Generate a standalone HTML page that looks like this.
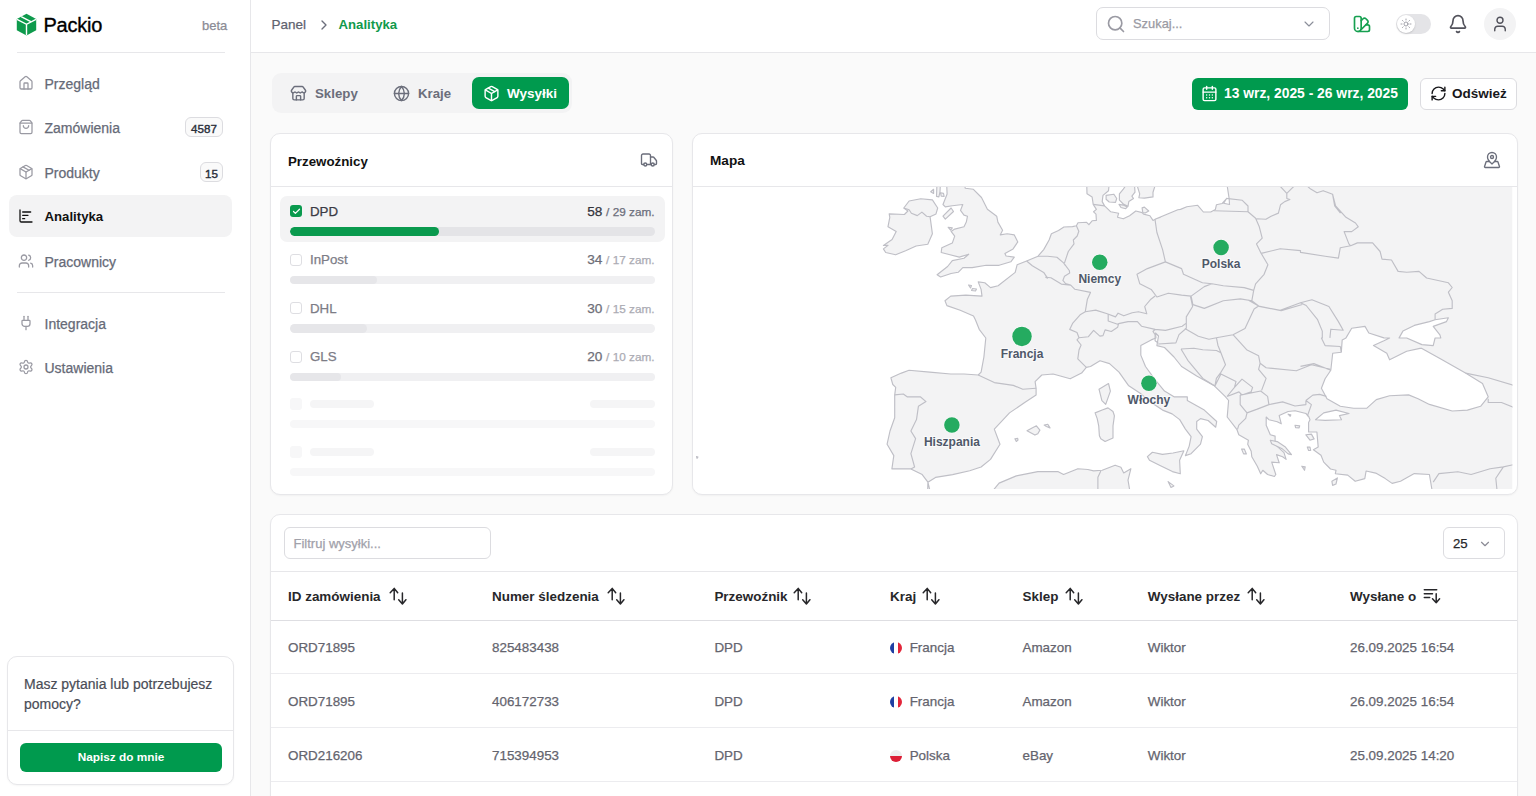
<!DOCTYPE html>
<html lang="pl">
<head>
<meta charset="utf-8">
<title>Packio - Analityka</title>
<style>
*{box-sizing:border-box;margin:0;padding:0}
html,body{width:1536px;height:796px;overflow:hidden}
body{position:relative;background:#fafafa;font-family:"Liberation Sans",sans-serif;color:#18181b;-webkit-font-smoothing:antialiased}
.abs{position:absolute}
svg.ic{position:absolute;fill:none;stroke:currentColor;stroke-linecap:round;stroke-linejoin:round}
.t{position:absolute;white-space:nowrap;line-height:1;-webkit-text-stroke:0.25px currentColor}
.t[style*="font-weight:bold"],.nav.act .t{-webkit-text-stroke:0}
/* sidebar */
#sb{position:absolute;left:0;top:0;width:251px;height:796px;background:#fff;border-right:1px solid #e7e7ea}
.nav{position:absolute;left:9px;width:223px;height:42px;border-radius:8px}
.nav.act{background:#f3f3f4}
.nav .t{left:35.5px;top:14.5px;font-size:14px;color:#666a77}
.nav.act .t{color:#111;font-weight:bold;font-size:13.2px;top:15px}
.nav svg{left:9.3px;top:13px;width:16px;height:16px;color:#9a9aa3;stroke-width:1.9}
.nav.act svg{color:#111}
.badge{position:absolute;height:20px;border:1px solid #dcdce0;border-radius:6px;font-size:11.6px;-webkit-text-stroke:0.4px #2a2f3a;line-height:21px;text-align:center;color:#2a2f3a;background:#fafafa}
.hr{position:absolute;height:1px;background:#e7e7ea}
/* header */
#hd{position:absolute;left:251px;top:0;width:1285px;height:53px;background:#fff;border-bottom:1px solid #e7e7ea}
.card{position:absolute;background:#fff;border:1px solid #e7e7ea;border-radius:10px;overflow:hidden;box-shadow:0 1px 2px rgba(0,0,0,.04)}
</style>
</head>
<body>
<!-- SIDEBAR -->
<div id="sb">
  <svg class="abs" style="left:16px;top:13px" width="21" height="23" viewBox="0 0 21 23">
    <path d="M10.5 0.8 L20.2 6 L20.2 17.2 L10.5 22.4 L0.8 17.2 L0.8 6 Z" fill="#0e9a4c"/>
    <path d="M1 6.3 L10.5 11.3 L20 6.3 M10.5 11.3 L10.5 22.3 M5.2 3.6 L14.8 8.7" stroke="#fff" stroke-width="1.4" fill="none"/>
  </svg>
  <div class="t" style="left:43.5px;top:15.2px;font-size:20px;color:#000;letter-spacing:-0.25px;-webkit-text-stroke:0.35px #000">Packio</div>
  <div class="t" style="left:202px;top:19px;font-size:13px;color:#8b8b95">beta</div>
  <div class="hr" style="left:17px;top:52px;width:208px"></div>

  <div class="nav" style="top:62px">
    <svg class="ic" viewBox="0 0 24 24"><path d="M15 21v-8a1 1 0 0 0-1-1h-4a1 1 0 0 0-1 1v8"/><path d="M3 10a2 2 0 0 1 .709-1.528l7-6a2 2 0 0 1 2.582 0l7 6A2 2 0 0 1 21 10v9a2 2 0 0 1-2 2H5a2 2 0 0 1-2-2z"/></svg>
    <div class="t">Przegląd</div>
  </div>
  <div class="nav" style="top:106px">
    <svg class="ic" viewBox="0 0 24 24"><path d="M16 10a4 4 0 0 1-8 0"/><path d="M3.103 6.034h17.794"/><path d="M3.4 5.467a2 2 0 0 0-.4 1.2V20a2 2 0 0 0 2 2h14a2 2 0 0 0 2-2V6.667a2 2 0 0 0-.4-1.2l-2-2.667A2 2 0 0 0 17 2H7a2 2 0 0 0-1.6.8z"/></svg>
    <div class="t">Zamówienia</div>
  </div>
  <div class="badge" style="left:185px;top:117px;width:38px">4587</div>
  <div class="nav" style="top:151px">
    <svg class="ic" viewBox="0 0 24 24"><path d="M11 21.73a2 2 0 0 0 2 0l7-4A2 2 0 0 0 21 16V8a2 2 0 0 0-1-1.73l-7-4a2 2 0 0 0-2 0l-7 4A2 2 0 0 0 3 8v8a2 2 0 0 0 1 1.73z"/><path d="M12 22V12"/><polyline points="3.29 7 12 12 20.71 7"/><path d="m7.5 4.27 9 5.15"/></svg>
    <div class="t">Produkty</div>
  </div>
  <div class="badge" style="left:200px;top:162px;width:23px">15</div>
  <div class="nav act" style="top:195px">
    <svg class="ic" viewBox="0 0 24 24"><path d="M3 3v16a2 2 0 0 0 2 2h16"/><path d="M7 11h8"/><path d="M7 16h3"/><path d="M7 6h12"/></svg>
    <div class="t">Analityka</div>
  </div>
  <div class="nav" style="top:240px">
    <svg class="ic" viewBox="0 0 24 24"><path d="M16 21v-2a4 4 0 0 0-4-4H6a4 4 0 0 0-4 4v2"/><path d="M16 3.128a4 4 0 0 1 0 7.744"/><path d="M22 21v-2a4 4 0 0 0-3-3.87"/><circle cx="9" cy="7" r="4"/></svg>
    <div class="t">Pracownicy</div>
  </div>
  <div class="hr" style="left:17px;top:292px;width:208px"></div>
  <div class="nav" style="top:302px">
    <svg class="ic" viewBox="0 0 24 24"><path d="M12 22v-5"/><path d="M15 8V2"/><path d="M17 8a1 1 0 0 1 1 1v4a4 4 0 0 1-4 4h-4a4 4 0 0 1-4-4V9a1 1 0 0 1 1-1z"/><path d="M9 8V2"/></svg>
    <div class="t">Integracja</div>
  </div>
  <div class="nav" style="top:346px">
    <svg class="ic" viewBox="0 0 24 24"><path d="M9.671 4.136a2.34 2.34 0 0 1 4.659 0 2.34 2.34 0 0 0 3.319 1.915 2.34 2.34 0 0 1 2.33 4.033 2.34 2.34 0 0 0 0 3.831 2.34 2.34 0 0 1-2.33 4.033 2.34 2.34 0 0 0-3.319 1.915 2.34 2.34 0 0 1-4.659 0 2.34 2.34 0 0 0-3.32-1.915 2.34 2.34 0 0 1-2.33-4.033 2.34 2.34 0 0 0 0-3.831A2.34 2.34 0 0 1 6.35 6.051a2.34 2.34 0 0 0 3.319-1.915"/><circle cx="12" cy="12" r="3"/></svg>
    <div class="t">Ustawienia</div>
  </div>

  <!-- help card -->
  <div class="card" style="left:7px;top:656px;width:227px;height:129px;border-radius:10px">
    <div style="position:absolute;left:16px;top:17px;width:210px;font-size:14px;line-height:20px;color:#4a4d57;-webkit-text-stroke:0.2px #4a4d57">Masz pytania lub potrzebujesz pomocy?</div>
    <div class="hr" style="left:0;top:73px;width:227px"></div>
    <div class="abs" style="left:12px;top:86px;width:202px;height:29px;background:#009a4e;border-radius:6px;color:#fff;font-size:11.8px;font-weight:bold;text-align:center;line-height:29px">Napisz do mnie</div>
  </div>
</div>

<!-- HEADER -->
<div id="hd">
  <div class="t" style="left:20.5px;top:17.5px;font-size:13.5px;color:#60636f">Panel</div>
  <svg class="ic" style="left:65px;top:17px;width:16px;height:16px;color:#6b6e7b;stroke-width:2" viewBox="0 0 24 24"><path d="m9 18 6-6-6-6"/></svg>
  <div class="t" style="left:87.5px;top:18px;font-size:13.2px;color:#119a4c;font-weight:bold">Analityka</div>

  <div class="abs" style="left:845px;top:7px;width:234px;height:33px;border:1px solid #dcdce0;border-radius:7px;background:#fff"></div>
  <svg class="ic" style="left:855px;top:14px;width:20px;height:20px;color:#9a9aa3;stroke-width:2" viewBox="0 0 24 24"><path d="m21 21-4.34-4.34"/><circle cx="11" cy="11" r="8"/></svg>
  <div class="t" style="left:882px;top:17.5px;font-size:12.9px;color:#9a9aa3">Szukaj...</div>
  <svg class="ic" style="left:1050px;top:16px;width:16px;height:16px;color:#8b8e99;stroke-width:1.7" viewBox="0 0 24 24"><path d="m6 9 6 6 6-6"/></svg>

  <svg class="ic" style="left:1101px;top:14px;width:20px;height:20px;color:#16a050;stroke-width:2" viewBox="0 0 24 24"><path d="M11 17a4 4 0 0 1-8 0V5a2 2 0 0 1 2-2h4a2 2 0 0 1 2 2Z"/><path d="M16.7 13H19a2 2 0 0 1 2 2v4a2 2 0 0 1-2 2H7"/><path d="M 7 17h.01"/><path d="m11 8 2.3-2.3a2.4 2.4 0 0 1 3.404.004L18.6 7.6a2.4 2.4 0 0 1 .026 3.434L9.9 19.8"/></svg>

  <div class="abs" style="left:1144.5px;top:14px;width:35.5px;height:20px;border-radius:10px;background:#e4e4e7"></div>
  <div class="abs" style="left:1145.5px;top:15px;width:18px;height:18px;border-radius:9px;background:#fff;box-shadow:0 1px 2px rgba(0,0,0,.15)"></div>
  <svg class="ic" style="left:1148.5px;top:18px;width:12px;height:12px;color:#8b8b95;stroke-width:1.6" viewBox="0 0 24 24"><circle cx="12" cy="12" r="4"/><path d="M12 2v2"/><path d="M12 20v2"/><path d="m4.93 4.93 1.41 1.41"/><path d="m17.66 17.66 1.41 1.41"/><path d="M2 12h2"/><path d="M20 12h2"/><path d="m6.34 17.66-1.41 1.41"/><path d="m19.07 4.93-1.41 1.41"/></svg>

  <svg class="ic" style="left:1197px;top:14px;width:20px;height:20px;color:#52525b;stroke-width:2" viewBox="0 0 24 24"><path d="M10.268 21a2 2 0 0 0 3.464 0"/><path d="M3.262 15.326A1 1 0 0 0 4 17h16a1 1 0 0 0 .74-1.673C19.41 13.956 18 12.499 18 8A6 6 0 0 0 6 8c0 4.499-1.411 5.956-2.738 7.326"/></svg>

  <div class="abs" style="left:1233px;top:8px;width:32px;height:32px;border-radius:16px;background:#f3f3f4"></div>
  <svg class="ic" style="left:1240px;top:15px;width:18px;height:18px;color:#52525b;stroke-width:1.9" viewBox="0 0 24 24"><path d="M19 21v-2a4 4 0 0 0-4-4H9a4 4 0 0 0-4 4v2"/><circle cx="12" cy="7" r="4"/></svg>
</div>

<!-- TOOLBAR -->
<div class="abs" style="left:272px;top:73px;width:300px;height:40px;border-radius:9px;background:#f3f3f4"></div>
<svg class="ic" style="left:290px;top:85px;width:17px;height:17px;color:#6b6e7b;stroke-width:2" viewBox="0 0 24 24"><path d="M15 21v-5a1 1 0 0 0-1-1h-4a1 1 0 0 0-1 1v5"/><path d="M17.774 10.31a1.12 1.12 0 0 0-1.549 0 2.5 2.5 0 0 1-3.451 0 1.12 1.12 0 0 0-1.548 0 2.5 2.5 0 0 1-3.452 0 1.12 1.12 0 0 0-1.549 0 2.5 2.5 0 0 1-3.77-3.248l2.889-4.184A2 2 0 0 1 7 2h10a2 2 0 0 1 1.653.873l2.895 4.192a2.5 2.5 0 0 1-3.774 3.244"/><path d="M4 10.95V19a2 2 0 0 0 2 2h12a2 2 0 0 0 2-2v-8.05"/></svg>
<div class="t" style="left:315px;top:87px;font-size:13.3px;font-weight:bold;color:#6b6e7b">Sklepy</div>
<svg class="ic" style="left:393px;top:85px;width:17px;height:17px;color:#6b6e7b;stroke-width:2" viewBox="0 0 24 24"><circle cx="12" cy="12" r="10"/><path d="M12 2a14.5 14.5 0 0 0 0 20 14.5 14.5 0 0 0 0-20"/><path d="M2 12h20"/></svg>
<div class="t" style="left:418px;top:87px;font-size:13.2px;font-weight:bold;color:#6b6e7b">Kraje</div>
<div class="abs" style="left:472px;top:77px;width:97px;height:32px;border-radius:7px;background:#009a4e"></div>
<svg class="ic" style="left:482.5px;top:85px;width:17px;height:17px;color:#fff;stroke-width:2" viewBox="0 0 24 24"><path d="M11 21.73a2 2 0 0 0 2 0l7-4A2 2 0 0 0 21 16V8a2 2 0 0 0-1-1.73l-7-4a2 2 0 0 0-2 0l-7 4A2 2 0 0 0 3 8v8a2 2 0 0 0 1 1.73z"/><path d="M12 22V12"/><polyline points="3.29 7 12 12 20.71 7"/><path d="m7.5 4.27 9 5.15"/></svg>
<div class="t" style="left:507px;top:87px;font-size:13.5px;font-weight:bold;color:#fff">Wysyłki</div>

<div class="abs" style="left:1192px;top:77.5px;width:216px;height:32px;border-radius:6px;background:#009a4e"></div>
<svg class="ic" style="left:1201px;top:84.5px;width:17px;height:17px;color:#fff;stroke-width:2" viewBox="0 0 24 24"><path d="M8 2v4"/><path d="M16 2v4"/><rect width="18" height="18" x="3" y="4" rx="2"/><path d="M3 10h18"/><path d="M8 14h.01"/><path d="M12 14h.01"/><path d="M16 14h.01"/><path d="M8 18h.01"/><path d="M12 18h.01"/><path d="M16 18h.01"/></svg>
<div class="t" style="left:1224px;top:87px;font-size:13.85px;font-weight:bold;color:#fff">13 wrz, 2025 - 26 wrz, 2025</div>
<div class="abs" style="left:1420px;top:77.5px;width:97px;height:32px;border-radius:6px;background:#fff;border:1px solid #dcdce0"></div>
<svg class="ic" style="left:1429.5px;top:84.5px;width:17px;height:17px;color:#18181b;stroke-width:2" viewBox="0 0 24 24"><path d="M3 12a9 9 0 0 1 9-9 9.75 9.75 0 0 1 6.74 2.74L21 8"/><path d="M21 3v5h-5"/><path d="M21 12a9 9 0 0 1-9 9 9.75 9.75 0 0 1-6.74-2.74L3 16"/><path d="M8 16H3v5"/></svg>
<div class="t" style="left:1452px;top:86.5px;font-size:13.5px;font-weight:bold;color:#18181b">Odśwież</div>

<!--BODY-->
<div class="card" style="left:270px;top:133px;width:403px;height:362px">
<div class="hr" style="left:0;top:52px;width:403px"></div></div>
<div class="t" style="left:288px;top:154.74px;font-size:13.3px;color:#111;font-weight:bold;">Przewoźnicy</div>
<svg class="ic" style="left:639.5px;top:151px;width:18px;height:18px;color:#6b6e7b;stroke-width:1.8" viewBox="0 0 24 24"><path d="M14 18V6a2 2 0 0 0-2-2H4a2 2 0 0 0-2 2v11a1 1 0 0 0 1 1h2"/><path d="M15 18H9"/><path d="M19 18h2a1 1 0 0 0 1-1v-3.65a1 1 0 0 0-.22-.624l-3.48-4.35A1 1 0 0 0 17.52 8H14"/><circle cx="17" cy="18" r="2"/><circle cx="7" cy="18" r="2"/></svg>
<div class="abs" style="left:280px;top:195.5px;width:385px;height:46px;border-radius:7px;background:#f3f3f4"></div>
<div class="abs" style="left:290px;top:205.0px;width:12px;height:12px;border-radius:3px;background:#0a9a4e"></div>
<svg class="ic" style="left:291.5px;top:206.5px;width:9px;height:9px;color:#fff;stroke-width:3.2" viewBox="0 0 24 24"><path d="M20 6 9 17l-5-5"/></svg>
<div class="t" style="left:310px;top:204.94px;font-size:13.3px;color:#3a3a44;">DPD</div>
<div class="t" style="right:881.4px;top:204.94px;font-size:13.3px;color:#33333b"><span style="font-size:13.6px">58</span> <span style="font-size:11.8px;color:#6b6e7b">/ 29 zam.</span></div>
<div class="abs" style="left:290px;top:227.1px;width:365px;height:8.8px;border-radius:4.4px;background:#e4e4e7;overflow:hidden"><div style="width:40.8%;height:8.8px;border-radius:4.4px;background:#0a9a4e"></div></div>
<div class="abs" style="left:290px;top:253.5px;width:12px;height:12px;border-radius:3px;border:1px solid #dedee2;background:#fff"></div>
<div class="t" style="left:310px;top:253.44px;font-size:13.3px;color:#7c7c86;">InPost</div>
<div class="t" style="right:881.4px;top:253.44px;font-size:13.3px;color:#6e6e77"><span style="font-size:13.6px">34</span> <span style="font-size:11.8px;color:#ababb3">/ 17 zam.</span></div>
<div class="abs" style="left:290px;top:275.6px;width:365px;height:8.8px;border-radius:4.4px;background:#f0f0f2;overflow:hidden"><div style="width:23.9%;height:8.8px;border-radius:4.4px;background:#e6e6e9"></div></div>
<div class="abs" style="left:290px;top:302.0px;width:12px;height:12px;border-radius:3px;border:1px solid #dedee2;background:#fff"></div>
<div class="t" style="left:310px;top:301.94px;font-size:13.3px;color:#7c7c86;">DHL</div>
<div class="t" style="right:881.4px;top:301.94px;font-size:13.3px;color:#6e6e77"><span style="font-size:13.6px">30</span> <span style="font-size:11.8px;color:#ababb3">/ 15 zam.</span></div>
<div class="abs" style="left:290px;top:324.1px;width:365px;height:8.8px;border-radius:4.4px;background:#f0f0f2;overflow:hidden"><div style="width:21.1%;height:8.8px;border-radius:4.4px;background:#e6e6e9"></div></div>
<div class="abs" style="left:290px;top:350.5px;width:12px;height:12px;border-radius:3px;border:1px solid #dedee2;background:#fff"></div>
<div class="t" style="left:310px;top:350.44px;font-size:13.3px;color:#7c7c86;">GLS</div>
<div class="t" style="right:881.4px;top:350.44px;font-size:13.3px;color:#6e6e77"><span style="font-size:13.6px">20</span> <span style="font-size:11.8px;color:#ababb3">/ 10 zam.</span></div>
<div class="abs" style="left:290px;top:372.6px;width:365px;height:8.8px;border-radius:4.4px;background:#f0f0f2;overflow:hidden"><div style="width:14.1%;height:8.8px;border-radius:4.4px;background:#e6e6e9"></div></div>
<div class="abs" style="left:290px;top:397.6px;width:12px;height:12px;border-radius:3px;background:#f7f7f8"></div>
<div class="abs" style="left:310px;top:399.5px;width:64px;height:8px;border-radius:4px;background:#f5f5f6"></div>
<div class="abs" style="left:590px;top:399.5px;width:65px;height:8px;border-radius:4px;background:#f5f5f6"></div>
<div class="abs" style="left:290px;top:419.9px;width:365px;height:8px;border-radius:4px;background:#f7f7f8"></div>
<div class="abs" style="left:290px;top:446.1px;width:12px;height:12px;border-radius:3px;background:#f7f7f8"></div>
<div class="abs" style="left:310px;top:448.0px;width:64px;height:8px;border-radius:4px;background:#f5f5f6"></div>
<div class="abs" style="left:590px;top:448.0px;width:65px;height:8px;border-radius:4px;background:#f5f5f6"></div>
<div class="abs" style="left:290px;top:468.4px;width:365px;height:8px;border-radius:4px;background:#f7f7f8"></div>
<div class="card" id="mapcard" style="left:691.5px;top:133px;width:826px;height:362px">
<div id="mapwrap" style="position:absolute;left:0;top:53px;width:824px;height:307px;overflow:hidden"><svg width="820" height="303" viewBox="0 0 820 303" style="position:absolute;left:0;top:0">
<defs><clipPath id="mclip"><rect x="0" y="0" width="819.5" height="302.0"/></clipPath></defs><g clip-path="url(#mclip)">
<rect x="0" y="0" width="819.5" height="302.0" fill="#f3f3f4"/>
<path fill="#fff" stroke="#bfbfc6" stroke-width="1.15" stroke-linejoin="round" d="M-2.5 -7.0 L393.6 -7.0 L394.0 6.8 L399.1 9.9 L400.2 17.4 L403.4 22.4 L400.6 24.8 L403.0 27.1 L403.4 33.4 L399.1 33.8 L395.9 37.7 L393.6 35.3 L385.0 35.7 L383.4 38.8 L379.5 39.6 L370.9 40.0 L365.5 43.5 L358.4 46.7 L356.1 53.0 L350.7 62.6 L345.0 69.2 L333.6 74.0 L324.1 77.8 L322.2 85.4 L305.1 98.7 L297.5 100.6 L291.8 95.8 L285.2 94.9 L288.1 102.4 L289.0 109.1 L272.9 108.1 L257.7 109.1 L252.0 113.8 L253.9 118.6 L267.2 123.3 L280.5 129.0 L282.4 132.8 L286.2 142.3 L292.8 151.0 L290.9 170.0 L288.1 185.1 L285.2 188.0 L271.0 187.0 L257.7 187.0 L236.8 185.1 L216.0 183.3 L208.4 186.1 L197.9 190.8 L199.8 197.5 L202.7 200.3 L201.7 207.9 L201.7 230.7 L197.0 244.0 L194.1 257.2 L200.8 268.6 L198.9 281.9 L217.9 281.9 L229.2 287.6 L234.9 295.2 L234.5 310.0 L-2.5 310.0Z M234.9 295.2 L242.5 290.4 L259.6 287.6 L276.7 283.8 L288.1 280.0 L297.5 272.4 L307.0 257.2 L301.3 242.1 L316.5 225.9 L331.7 215.5 L343.1 207.9 L343.1 201.3 L342.1 194.6 L348.8 188.0 L360.1 187.0 L377.2 191.8 L388.6 186.1 L393.3 180.4 L397.5 179.5 L397.5 179.5 L407.0 173.8 L416.5 176.6 L426.0 185.1 L435.4 198.4 L446.8 206.0 L458.2 215.5 L469.6 223.1 L479.1 226.9 L486.7 232.6 L492.4 242.1 L498.1 249.7 L496.2 259.1 L492.4 268.6 L498.1 266.7 L507.5 257.2 L509.4 249.7 L503.7 242.1 L503.7 234.5 L507.5 231.6 L515.1 233.5 L522.7 240.2 L523.7 234.5 L511.3 223.1 L494.3 213.6 L494.3 209.8 L481.0 209.8 L471.5 204.1 L462.0 192.7 L452.5 179.5 L447.8 168.1 L447.8 158.6 L458.2 152.9 L463.0 151.0 L462.5 146.0 L465.5 149.0 L463.9 158.6 L471.5 160.5 L481.0 170.0 L488.6 179.5 L503.7 188.9 L520.8 198.4 L532.1 209.4 L535.6 213.5 L534.2 230.0 L543.8 242.3 L545.8 247.8 L555.4 253.2 L554.7 257.3 L558.2 264.2 L558.8 269.7 L564.3 279.2 L567.7 286.8 L569.8 283.3 L574.6 287.5 L581.4 289.5 L582.8 287.5 L578.7 275.1 L586.2 275.8 L583.5 267.6 L589.6 269.7 L593.1 272.4 L591.0 265.6 L582.1 257.3 L582.1 249.1 L577.3 247.8 L573.2 238.2 L573.2 230.0 L575.9 232.7 L584.2 234.8 L588.3 236.8 L586.2 228.6 L595.1 224.5 L602.0 223.8 L612.9 226.5 L615.6 229.3 L617.0 232.7 L615.6 235.4 L615.6 245.0 L623.9 245.0 L625.2 260.1 L620.4 262.8 L628.0 268.3 L630.7 275.1 L637.5 282.0 L643.0 283.3 L642.3 286.8 L654.7 288.1 L662.2 294.3 L671.8 291.6 L673.1 284.0 L682.7 286.1 L692.3 291.6 L699.1 296.4 L707.5 294.3 L721.3 286.6 L736.4 287.5 L740.2 310.0 L741.5 310.0 L437.5 310.0 L437.9 310.0 L435.0 293.2 L437.9 281.7 L430.7 286.0 L427.9 280.3 L422.1 278.2 L409.2 283.2 L400.6 283.9 L394.9 282.5 L384.9 281.7 L370.6 287.5 L364.8 284.6 L344.8 284.6 L323.3 288.9 L306.1 296.1 L294.7 310.0 L242.5 310.0 L238.5 310.0Z M416.6 -7.0 L415.5 3.7 L410.0 8.4 L409.2 14.6 L411.6 18.9 L417.8 24.8 L425.6 26.3 L424.5 30.2 L430.3 31.8 L436.6 28.7 L442.8 24.0 L449.1 25.6 L450.6 27.1 L456.9 28.7 L460.0 33.4 L463.1 31.8 L467.5 30.2 L462.0 32.3 L484.8 22.8 L487.5 22.4 L493.8 19.8 L504.7 18.3 L510.4 25.0 L517.7 25.0 L522.4 22.4 L523.4 17.8 L529.2 16.5 L533.3 12.0 L530.7 16.2 L536.5 17.5 L536.2 12.0 L533.3 -7.0 L463.9 -7.0 L460.0 5.2 L460.0 9.9 L451.4 11.1 L445.9 10.7 L446.7 6.8 L442.4 -7.0Z M653.0 151.0 L649.2 152.9 L648.3 165.2 L639.7 166.2 L637.8 183.2 L632.1 191.8 L628.4 201.2 L634.0 211.7 L647.3 219.3 L660.6 221.2 L673.9 221.2 L683.3 212.6 L696.6 208.8 L715.6 207.9 L725.1 211.7 L736.4 217.4 L759.2 224.0 L774.4 223.1 L787.6 219.3 L795.2 209.8 L789.5 196.5 L772.5 186.1 L747.8 171.9 L728.9 161.4 L727.0 161.4 L713.7 164.3 L696.6 172.8 L693.8 166.2 L680.5 158.6 L690.9 153.8 L696.6 151.0 L690.9 150.9 L675.8 146.0 L672.0 139.4 L658.7 141.3 L653.0 150.9Z M706.1 150.9 L709.9 144.1 L721.3 138.4 L736.4 134.6 L742.1 132.7 L755.4 130.8 L753.5 134.6 L740.2 139.4 L746.9 147.9 L747.8 150.9 L742.1 151.0 L740.2 158.6 L728.9 157.6 L713.7 151.0Z M622.5 232.7 L630.7 225.9 L643.0 223.1 L656.0 226.5 L646.4 228.6 L648.5 232.7 L632.1 233.4Z"/>
<path fill="#f3f3f4" stroke="#bfbfc6" stroke-width="1.15" stroke-linejoin="round" d="M3.5 269.5 L5.0 270.0 L4.0 271.3Z M275.5 98.0 L278.5 98.5 L277.5 101.0Z M279.5 101.5 L283.5 102.0 L282.5 104.0 L278.5 103.5Z M196.2 26.9 L211.4 27.5 L214.9 24.0 L210.8 21.0 L216.1 14.0 L227.8 11.7 L239.4 12.9 L244.7 21.0 L243.0 26.9 L237.1 29.8 L239.4 46.8 L234.8 57.3 L223.1 59.0 L212.6 63.7 L202.6 67.8 L192.7 65.5 L190.4 61.9 L195.0 58.4 L190.4 58.4 L199.1 52.6 L203.2 44.4 L195.0 39.7 L196.8 30.4Z M253.5 -7.0 L254.1 7.0 L250.0 17.5 L252.3 19.9 L259.3 18.7 L269.8 17.5 L267.5 23.4 L271.0 28.1 L274.5 29.2 L273.3 35.1 L271.0 39.7 L261.7 42.1 L258.1 44.4 L261.7 49.1 L259.3 56.1 L248.8 60.8 L248.2 65.5 L257.0 67.8 L266.3 70.1 L275.7 67.2 L271.0 71.3 L259.3 73.6 L254.6 79.5 L244.1 87.7 L247.6 90.0 L258.1 86.5 L265.2 85.3 L269.8 80.6 L279.2 80.6 L293.2 78.3 L306.1 78.3 L317.8 74.8 L321.3 70.1 L313.1 69.0 L311.9 66.6 L320.1 61.9 L324.8 54.9 L321.3 47.9 L314.2 46.8 L307.2 47.9 L309.6 43.2 L304.9 35.1 L303.7 29.2 L294.4 22.2 L288.5 10.5 L280.4 2.3 L272.2 1.2 L271.0 -7.0Z M244.1 -7.0 L247.6 -7.0 L247.0 4.7 L245.9 9.9 L243.5 9.4Z M247.6 5.8 L250.5 6.4 L251.1 9.4 L248.2 9.1Z M255.2 40.3 L259.3 40.9 L257.6 43.2Z M250.0 29.2 L258.1 21.0 L260.5 24.5 L252.3 32.1Z M237.7 4.7 L240.6 2.3 L240.6 6.4Z M406.0 202.2 L415.5 196.5 L417.4 204.1 L412.7 217.4 L408.9 213.6Z M402.1 225.9 L409.2 223.0 L415.0 220.9 L420.0 224.5 L421.4 228.8 L420.0 238.8 L420.0 251.0 L412.1 254.5 L407.8 251.7 L406.4 248.8 L405.7 238.8 L404.2 231.6Z M454.4 269.6 L459.4 265.3 L469.4 267.4 L480.1 266.0 L490.9 263.8 L486.6 273.2 L487.3 286.8 L479.4 284.6 L466.5 278.2 L456.5 273.2Z M334.0 243.8 L339.1 240.9 L343.4 238.8 L346.9 243.1 L344.8 246.7 L341.9 248.1Z M351.2 238.1 L354.8 237.3 L357.0 240.9 L353.4 239.5Z M321.9 251.7 L324.7 251.4 L325.0 253.1 L323.3 254.5Z M475.1 294.6 L480.9 298.9 L478.0 300.4Z M413.1 8.4 L420.9 7.2 L423.7 11.5 L422.5 15.4 L416.2 15.0 L413.1 12.3Z M426.4 6.8 L430.3 2.1 L436.6 -7.0 L441.2 -7.0 L442.0 5.2 L438.9 9.2 L440.5 11.5 L435.8 14.6 L435.0 19.3 L430.3 17.0 L426.4 13.1Z M426.0 17.4 L430.3 18.1 L434.2 20.1 L432.7 21.7 L428.0 20.5Z M449.1 20.9 L451.4 20.1 L455.7 24.0 L452.2 26.0 L449.8 25.6Z M577.3 253.2 L584.2 254.6 L592.4 260.1 L598.5 267.6 L595.1 266.9 L589.6 262.1 L578.7 256.7Z M612.9 247.8 L618.4 247.1 L621.1 251.9 L617.0 253.2Z M614.3 260.1 L617.0 260.1 L617.7 263.5 L615.6 263.5Z M602.0 238.2 L606.7 238.9 L606.1 240.9 L602.6 240.6Z M548.6 262.1 L551.3 262.1 L553.4 266.9 L550.6 266.9Z M608.8 279.2 L612.2 279.9 L611.5 283.3Z M638.9 294.3 L644.4 290.9 L643.0 297.0 L639.6 298.4Z M595.1 227.2 L597.8 227.9 L597.2 229.3Z"/>
<path fill="none" stroke="#bfbfc6" stroke-width="1.15" stroke-linejoin="round" d="M210.8 21.0 L216.1 22.8 L218.4 26.3 L224.3 28.6 L228.9 25.1 L233.6 29.2 L237.1 29.8 M400.2 17.4 L411.6 18.9 M383.4 38.8 L385.8 44.3 L384.2 49.0 L380.3 53.0 L381.0 56.9 L375.3 64.5 L371.5 75.9 M345.0 69.2 L354.5 69.2 L363.9 70.2 L370.6 75.9 L372.5 78.7 M462.0 32.3 L463.9 45.5 L469.6 62.6 L472.4 74.9 M472.4 74.9 L454.4 81.6 L444.0 87.3 L446.8 96.8 L458.2 102.4 L463.9 110.0 L475.3 106.2 L488.6 108.1 L498.1 109.1 L511.3 99.6 L518.9 96.8 M472.4 74.9 L488.6 81.6 L490.5 87.3 L509.4 95.8 L518.9 96.8 L530.3 98.7 L551.2 100.6 L560.7 103.4 M498.1 109.1 L499.9 117.6 L511.3 121.4 L530.3 113.8 L547.4 111.9 L558.8 113.8 L560.7 103.4 M520.8 23.7 L555.0 24.7 L562.6 31.3 L566.3 39.8 L569.2 51.2 L563.5 56.9 L568.2 66.4 L574.9 77.8 L571.1 87.3 L562.6 96.8 L560.7 103.4 M533.1 11.4 L549.3 13.3 L555.0 19.0 L555.0 24.7 M568.2 66.4 L587.2 61.7 L607.5 63.6 L607.5 65.4 L632.1 69.2 L645.4 71.1 L647.3 60.7 L657.7 58.8 M639.7 7.6 L642.6 19.0 L653.0 30.3 L662.5 36.0 L665.3 39.8 L658.7 44.6 L651.1 44.6 L655.9 56.9 L657.7 58.8 M657.7 58.8 L664.4 55.9 L679.6 55.9 L687.1 64.5 L689.0 72.1 L698.5 73.0 L705.1 84.4 L713.7 85.3 L726.0 84.4 L733.6 91.0 L755.4 95.8 L759.2 100.5 L755.4 105.2 L759.2 113.8 L759.2 121.4 L749.7 122.3 L742.1 127.0 L742.1 132.7 M558.8 113.8 L566.3 119.5 L587.2 123.3 L607.5 115.7 L607.5 115.7 L613.2 118.5 L624.6 132.7 L629.3 144.1 L629.3 150.9 L628.4 151.0 L632.1 158.6 L647.3 159.5 L648.3 165.2 M607.5 115.7 L618.9 112.8 L635.9 119.5 L645.4 134.6 L650.2 143.2 L637.8 142.2 L636.9 150.9 M772.5 186.1 L795.2 190.8 L827.5 200.3 M795.2 211.7 L795.2 215.5 L808.5 215.5 L827.5 223.1 M827.5 276.1 L810.4 279.9 L802.8 291.3 L804.7 310.0 M201.7 207.9 L210.3 207.0 L214.1 209.8 L227.3 209.8 L233.0 214.6 L225.4 219.3 L223.5 232.6 L217.9 244.0 L222.6 251.6 L217.9 266.7 L221.6 280.0 L217.9 281.9 M285.2 188.0 L301.3 195.6 L320.3 198.4 L329.8 202.2 L343.1 201.3 M740.2 295.1 L745.9 286.6 L764.9 284.7 L778.1 287.5 L797.1 281.8 L810.4 279.9 L827.5 276.1 M491.8 141.6 L505.3 149.2 L515.9 152.2 L523.4 150.7 L540.0 147.7 L552.0 141.6 L561.1 122.0 L565.6 119.0 L588.2 123.6 L609.3 117.5 M555.1 113.0 L565.6 119.0 M488.0 162.0 L500.8 161.2 L509.8 162.7 L523.4 163.5 L527.9 165.8 L532.5 177.8 L527.9 185.3 L523.4 191.4 L521.9 198.9 M488.0 162.0 L494.8 173.3 L509.8 191.4 L521.9 198.9 M523.4 150.7 L524.9 158.2 L527.9 165.8 M540.0 147.7 L553.6 162.7 L565.6 168.8 L567.1 176.3 L573.1 180.8 L603.3 183.8 L618.4 177.8 L637.5 182.3 M567.1 176.3 L565.6 182.3 L573.1 191.4 L568.6 203.4 M521.9 198.9 L527.9 186.9 L543.0 194.4 L541.5 200.4 L534.0 209.5 M541.5 200.4 L549.0 192.1 L559.6 200.4 L558.1 204.9 L549.0 208.0 M607.5 179.4 L620.8 176.6 L637.8 183.2 M534.0 209.5 L546.0 204.9 L549.0 208.0 M612.9 213.5 L619.8 208.1 L626.6 207.4 L633.4 209.4 M575.9 217.6 L589.6 214.9 L602.0 219.0 L612.9 217.6 L612.9 213.5 M612.9 213.5 L618.4 217.6 L614.3 229.3 M547.2 208.1 L567.7 204.0 L574.6 209.4 L575.9 217.6 L563.6 222.4 L554.0 225.9 L547.2 217.6 L547.2 208.1 M554.0 225.9 L552.7 231.3 L545.8 238.2 L544.5 242.3 M407.8 283.9 L404.9 290.3 L404.9 310.0 M333.6 74.0 L339.3 78.7 L350.7 85.4 L354.5 91.1 L352.7 90.3 L357.9 90.8 L368.3 97.1 L377.7 98.1 L381.9 102.3 L397.5 105.4 L394.4 112.2 L392.3 124.7 M370.6 75.9 L376.3 83.5 L376.7 86.1 L371.5 89.2 L369.9 93.4 L372.5 96.5 L377.7 98.1 M392.3 124.7 L402.7 123.1 L414.2 126.8 L422.5 129.9 L425.1 126.2 L430.8 128.8 L439.2 125.7 L445.4 124.7 L453.8 126.8 L451.7 119.5 L457.9 112.2 L462.1 109.0 M392.3 124.7 L387.1 127.8 L379.8 136.1 L376.7 142.4 L384.0 145.5 L386.0 150.7 L384.0 152.8 L388.1 158.0 L386.0 163.0 L384.8 171.9 L393.3 180.4 M386.0 150.7 L395.4 149.7 L400.6 143.4 L406.9 149.1 L410.0 148.6 L412.1 142.9 L418.3 144.5 L424.6 140.3 L425.6 136.6 M415.2 126.8 L415.2 134.0 L424.6 137.2 L425.6 136.6 M425.6 136.6 L435.0 134.6 L444.4 134.6 L448.5 139.2 L462.1 142.4 L472.5 143.4 L489.2 139.2 L493.3 136.1 L493.3 129.9 L499.6 119.5 L497.5 109.6 M462.1 142.4 L460.0 144.5 L462.1 147.6 L462.1 153.8 L465.2 155.9 M465.2 157.0 L482.9 155.9 L486.0 147.6 L493.3 141.3 L493.3 136.1 M563.5 31.8 L572.9 32.3 L578.1 29.2 L585.4 26.1 L587.5 17.8 L591.7 14.6 L596.9 12.5 L593.8 11.5 L593.8 6.3 M581.2 -7.0 L593.8 6.3 L607.3 -7.0 L617.7 2.1 L624.0 5.8 L630.2 3.7 L639.6 7.3 L641.7 18.8 L647.5 26.1"/>
</g>
<circle cx="406.75" cy="75.20" r="8.35" fill="#fff" fill-opacity="0.7"/>
<circle cx="406.75" cy="75.20" r="7.75" fill="#25ab60"/>
<circle cx="528.10" cy="60.50" r="8.35" fill="#fff" fill-opacity="0.7"/>
<circle cx="528.10" cy="60.50" r="7.75" fill="#25ab60"/>
<circle cx="329.00" cy="149.40" r="10.35" fill="#fff" fill-opacity="0.7"/>
<circle cx="329.00" cy="149.40" r="9.75" fill="#25ab60"/>
<circle cx="455.90" cy="196.20" r="8.35" fill="#fff" fill-opacity="0.7"/>
<circle cx="455.90" cy="196.20" r="7.75" fill="#25ab60"/>
<circle cx="258.90" cy="238.10" r="8.35" fill="#fff" fill-opacity="0.7"/>
<circle cx="258.90" cy="238.10" r="7.75" fill="#25ab60"/>
<text x="406.75" y="95.60" text-anchor="middle" font-family="Liberation Sans" font-weight="bold" font-size="12" fill="#4f5869" stroke="#fff" stroke-width="2" stroke-opacity="0.6" paint-order="stroke">Niemcy</text>
<text x="528.10" y="80.90" text-anchor="middle" font-family="Liberation Sans" font-weight="bold" font-size="12" fill="#4f5869" stroke="#fff" stroke-width="2" stroke-opacity="0.6" paint-order="stroke">Polska</text>
<text x="329.00" y="170.80" text-anchor="middle" font-family="Liberation Sans" font-weight="bold" font-size="12" fill="#4f5869" stroke="#fff" stroke-width="2" stroke-opacity="0.6" paint-order="stroke">Francja</text>
<text x="455.90" y="216.60" text-anchor="middle" font-family="Liberation Sans" font-weight="bold" font-size="12" fill="#4f5869" stroke="#fff" stroke-width="2" stroke-opacity="0.6" paint-order="stroke">Włochy</text>
<text x="258.90" y="258.50" text-anchor="middle" font-family="Liberation Sans" font-weight="bold" font-size="12" fill="#4f5869" stroke="#fff" stroke-width="2" stroke-opacity="0.6" paint-order="stroke">Hiszpania</text>
</svg></div>
<div class="hr" style="left:0;top:52px;width:826px"></div>
</div>
<div class="t" style="left:710px;top:154.19px;font-size:13.6px;color:#111;font-weight:bold;">Mapa</div>
<svg class="ic" style="left:1483px;top:151px;width:18px;height:18px;color:#6b6e7b;stroke-width:1.8" viewBox="0 0 24 24"><path d="M18 8c0 3.613-3.869 7.429-5.393 8.795a1 1 0 0 1-1.214 0C9.87 15.429 6 11.613 6 8a6 6 0 0 1 12 0"/><circle cx="12" cy="8" r="2"/><path d="M8.714 14h-3.71a1 1 0 0 0-.948.683l-2.004 6A1 1 0 0 0 3 22h18a1 1 0 0 0 .948-1.316l-2-6a1 1 0 0 0-.949-.684h-3.712"/></svg>
<div class="card" style="left:270px;top:514px;width:1247.5px;height:300px">
<div class="hr" style="left:0;top:56px;width:1247.5px"></div>
<div class="hr" style="left:0;top:105.3px;width:1247.5px;background:#dedee2"></div>
<div class="hr" style="left:0;top:158.3px;width:1247.5px;background:#ececef"></div>
<div class="hr" style="left:0;top:212.1px;width:1247.5px;background:#ececef"></div>
<div class="hr" style="left:0;top:265.9px;width:1247.5px;background:#ececef"></div>
</div>
<div class="abs" style="left:284px;top:526.5px;width:207px;height:32px;border:1px solid #dcdce0;border-radius:6px;background:#fff"></div>
<div class="t" style="left:293.5px;top:537.00px;font-size:13px;color:#a1a1aa;">Filtruj wysyłki...</div>
<div class="abs" style="left:1442.5px;top:526.5px;width:62px;height:32px;border:1px solid #dcdce0;border-radius:6px;background:#fff"></div>
<div class="t" style="left:1453px;top:537.33px;font-size:13.2px;color:#27272a;">25</div>
<svg class="ic" style="left:1477.5px;top:536.5px;width:14px;height:14px;color:#8b8b95;stroke-width:2" viewBox="0 0 24 24"><path d="m6 9 6 6 6-6"/></svg>
<div class="t" style="left:288px;top:590.31px;font-size:13.45px;color:#27272a;font-weight:bold;">ID zamówienia</div>
<svg class="ic" style="left:387.0px;top:587px;width:20px;height:18px;color:#27272a;stroke-width:1.5" viewBox="0 0 20 18"><path d="M3.2 5.7 7.2 1.4 10.7 5.7M7.2 1.6V12.7"/><path d="M11.7 12.7 15.4 16.9 18.9 12.7M15.4 5.9V16.7"/></svg>
<div class="t" style="left:492px;top:590.31px;font-size:13.45px;color:#27272a;font-weight:bold;">Numer śledzenia</div>
<svg class="ic" style="left:605.0px;top:587px;width:20px;height:18px;color:#27272a;stroke-width:1.5" viewBox="0 0 20 18"><path d="M3.2 5.7 7.2 1.4 10.7 5.7M7.2 1.6V12.7"/><path d="M11.7 12.7 15.4 16.9 18.9 12.7M15.4 5.9V16.7"/></svg>
<div class="t" style="left:714.4px;top:590.31px;font-size:13.45px;color:#27272a;font-weight:bold;">Przewoźnik</div>
<svg class="ic" style="left:791.0px;top:587px;width:20px;height:18px;color:#27272a;stroke-width:1.5" viewBox="0 0 20 18"><path d="M3.2 5.7 7.2 1.4 10.7 5.7M7.2 1.6V12.7"/><path d="M11.7 12.7 15.4 16.9 18.9 12.7M15.4 5.9V16.7"/></svg>
<div class="t" style="left:890px;top:590.31px;font-size:13.45px;color:#27272a;font-weight:bold;">Kraj</div>
<svg class="ic" style="left:920.0px;top:587px;width:20px;height:18px;color:#27272a;stroke-width:1.5" viewBox="0 0 20 18"><path d="M3.2 5.7 7.2 1.4 10.7 5.7M7.2 1.6V12.7"/><path d="M11.7 12.7 15.4 16.9 18.9 12.7M15.4 5.9V16.7"/></svg>
<div class="t" style="left:1022.5px;top:590.31px;font-size:13.45px;color:#27272a;font-weight:bold;">Sklep</div>
<svg class="ic" style="left:1062.6px;top:587px;width:20px;height:18px;color:#27272a;stroke-width:1.5" viewBox="0 0 20 18"><path d="M3.2 5.7 7.2 1.4 10.7 5.7M7.2 1.6V12.7"/><path d="M11.7 12.7 15.4 16.9 18.9 12.7M15.4 5.9V16.7"/></svg>
<div class="t" style="left:1147.8px;top:590.31px;font-size:13.45px;color:#27272a;font-weight:bold;">Wysłane przez</div>
<svg class="ic" style="left:1245.4px;top:587px;width:20px;height:18px;color:#27272a;stroke-width:1.5" viewBox="0 0 20 18"><path d="M3.2 5.7 7.2 1.4 10.7 5.7M7.2 1.6V12.7"/><path d="M11.7 12.7 15.4 16.9 18.9 12.7M15.4 5.9V16.7"/></svg>
<div class="t" style="left:1350px;top:590.31px;font-size:13.45px;color:#27272a;font-weight:bold;">Wysłane o</div>
<svg class="ic" style="left:1422px;top:587px;width:20px;height:18px;color:#27272a;stroke-width:1.5" viewBox="0 0 20 18"><path d="M2.3 2.8H14.7M2.3 6.7H10.5M2.3 10.4H7.7"/><path d="M14.2 6.7V15.7M10.5 11.7 14.2 15.7 17.6 11.7"/></svg>
<div class="t" style="left:288px;top:641.26px;font-size:13.4px;color:#64646e;">ORD71895</div>
<div class="t" style="left:492px;top:641.26px;font-size:13.4px;color:#64646e;">825483438</div>
<div class="t" style="left:714.4px;top:641.26px;font-size:13.4px;color:#64646e;">DPD</div>
<div class="abs" style="left:889.5px;top:642.1px;width:12px;height:12px;border-radius:6px;overflow:hidden;background:linear-gradient(90deg,#1f3fa3 0 33%,#fff 33% 67%,#e3263a 67%)"></div>
<div class="t" style="left:909.7px;top:641.26px;font-size:13.4px;color:#64646e;">Francja</div>
<div class="t" style="left:1022.5px;top:641.26px;font-size:13.4px;color:#64646e;">Amazon</div>
<div class="t" style="left:1147.8px;top:641.26px;font-size:13.4px;color:#64646e;">Wiktor</div>
<div class="t" style="left:1350px;top:641.26px;font-size:13.4px;color:#64646e;">26.09.2025 16:54</div>
<div class="t" style="left:288px;top:695.06px;font-size:13.4px;color:#64646e;">ORD71895</div>
<div class="t" style="left:492px;top:695.06px;font-size:13.4px;color:#64646e;">406172733</div>
<div class="t" style="left:714.4px;top:695.06px;font-size:13.4px;color:#64646e;">DPD</div>
<div class="abs" style="left:889.5px;top:695.9px;width:12px;height:12px;border-radius:6px;overflow:hidden;background:linear-gradient(90deg,#1f3fa3 0 33%,#fff 33% 67%,#e3263a 67%)"></div>
<div class="t" style="left:909.7px;top:695.06px;font-size:13.4px;color:#64646e;">Francja</div>
<div class="t" style="left:1022.5px;top:695.06px;font-size:13.4px;color:#64646e;">Amazon</div>
<div class="t" style="left:1147.8px;top:695.06px;font-size:13.4px;color:#64646e;">Wiktor</div>
<div class="t" style="left:1350px;top:695.06px;font-size:13.4px;color:#64646e;">26.09.2025 16:54</div>
<div class="t" style="left:288px;top:748.86px;font-size:13.4px;color:#64646e;">ORD216206</div>
<div class="t" style="left:492px;top:748.86px;font-size:13.4px;color:#64646e;">715394953</div>
<div class="t" style="left:714.4px;top:748.86px;font-size:13.4px;color:#64646e;">DPD</div>
<div class="abs" style="left:889.5px;top:749.7px;width:12px;height:12px;border-radius:6px;overflow:hidden;background:linear-gradient(180deg,#eeeeee 0 50%,#dc1e35 50%)"></div>
<div class="t" style="left:909.7px;top:748.86px;font-size:13.4px;color:#64646e;">Polska</div>
<div class="t" style="left:1022.5px;top:748.86px;font-size:13.4px;color:#64646e;">eBay</div>
<div class="t" style="left:1147.8px;top:748.86px;font-size:13.4px;color:#64646e;">Wiktor</div>
<div class="t" style="left:1350px;top:748.86px;font-size:13.4px;color:#64646e;">25.09.2025 14:20</div>
<!--/BODY-->
</body>
</html>
